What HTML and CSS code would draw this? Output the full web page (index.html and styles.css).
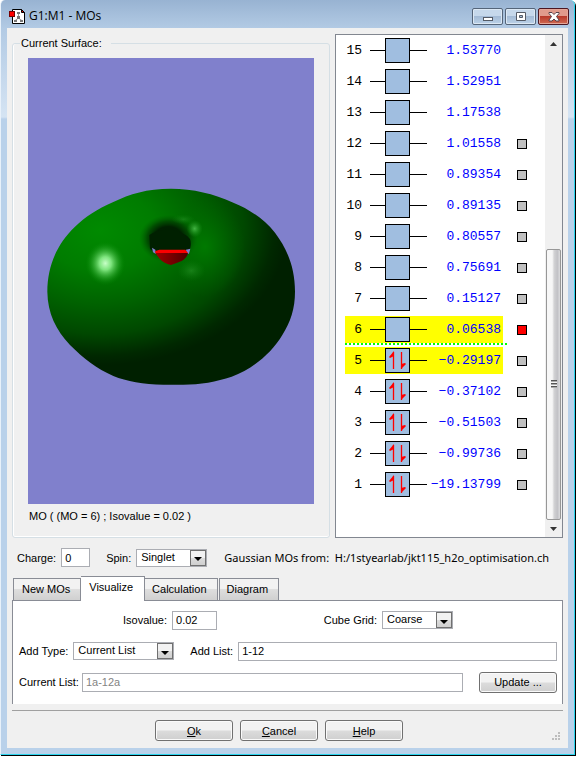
FILE: index.html
```html
<!DOCTYPE html>
<html lang="en">
<head>
<meta charset="utf-8">
<title>G1:M1 - MOs</title>
<link rel="stylesheet" href="styles.css">
</head>
<body>
<div class="window">
  <header class="titlebar">
    <svg class="app-icon" width="17" height="17" viewBox="0 0 17 17" aria-hidden="true">
      <path d="M3.500 1.500h9l3 3v11h-12z" fill="#fff" stroke="#000"/>
      <path d="M12.500 1.500v3h3z" fill="#e00" stroke="#000"/>
      <path d="M9.500 5v5l-4 3M9.500 10l4 3" fill="none" stroke="#999"/>
      <path d="M8 4h3v2h-3zM8 8h3v3h-3zM5 12h3v2h-3zM11 12h3v2h-3z" fill="#777"/>
      <rect x=".5" y="3.500" width="5" height="5" fill="#f00" stroke="#700"/>
    </svg>
    <h1 class="title">G1:M1 - MOs</h1>
    <div class="caption-buttons">
      <button class="cap" type="button" aria-label="Minimize"><svg width="12" height="12" viewBox="0 0 12 12"><rect x="1.500" y="6.500" width="9" height="3" fill="#fff" stroke="#555b66"/></svg></button>
      <button class="cap" type="button" aria-label="Maximize"><svg width="12" height="12" viewBox="0 0 12 12"><path d="M1.500 1.500h9v8h-9zM4.500 4.500v2h3v-2z" fill="#fff" fill-rule="evenodd" stroke="#555b66"/></svg></button>
      <button class="cap cap-close" type="button" aria-label="Close"><svg width="12" height="12" viewBox="0 0 12 12"><path d="M1 1.500h3l2 2 2-2h3v1L8.500 5.500 11 9v1H8L6 8 4 10H1V9l2.500-3.500L1 2.500z" fill="#fff" stroke="#56414a"/></svg></button>
    </div>
  </header>

  <main class="client">
    <div class="top">
      <fieldset class="surface">
        <legend>Current Surface:</legend>
        <svg class="viewer" viewBox="0 0 286 446" role="img" aria-label="Molecular orbital surface">
          <defs>
            <radialGradient id="body" gradientUnits="userSpaceOnUse" cx="0" cy="0" r="1" gradientTransform="translate(210 180) scale(560 405)">
              <stop offset="0" stop-color="#008a00"/><stop offset=".3" stop-color="#007c00"/>
              <stop offset=".55" stop-color="#006200"/><stop offset=".77" stop-color="#004800"/>
              <stop offset=".93" stop-color="#002800"/><stop offset="1" stop-color="#002000"/>
            </radialGradient>
            <radialGradient id="shine">
              <stop offset="0" stop-color="#c8ffc8"/><stop offset=".3" stop-color="#8cf08c" stop-opacity=".9"/>
              <stop offset=".65" stop-color="#40b840" stop-opacity=".5"/><stop offset="1" stop-color="#008800" stop-opacity="0"/>
            </radialGradient>
            <radialGradient id="glint">
              <stop offset="0" stop-color="#4fc04f" stop-opacity=".85"/><stop offset="1" stop-color="#1c961c" stop-opacity="0"/>
            </radialGradient>
            <radialGradient id="funnel">
              <stop offset="0" stop-color="#001e00"/><stop offset=".5" stop-color="#002000"/>
              <stop offset=".72" stop-color="#003800" stop-opacity=".7"/><stop offset="1" stop-color="#006000" stop-opacity="0"/>
            </radialGradient>
            <radialGradient id="right-lobe">
              <stop offset="0" stop-color="#007c00" stop-opacity=".9"/><stop offset="1" stop-color="#006800" stop-opacity="0"/>
            </radialGradient>
            <linearGradient id="bowl"><stop offset="0" stop-color="#a00000"/><stop offset="1" stop-color="#4c0000"/></linearGradient>
          </defs>
          <rect width="286" height="446" fill="#8080cc"/>
          <g transform="translate(2 112) scale(.33333)">
            <path d="M423 56C350 56 300 72 250 96C200 117 165 142 135 170C80 222 52 290 52 365C53 430 78 480 120 525C160 565 200 596 250 618C290 634 340 643 400 644H460C510 644 560 635 605 620C670 597 725 548 757 495C782 455 795 415 795 365C795 290 770 235 735 188C700 145 655 116 610 98C550 70 490 57 423 56Z" fill="url(#body)"/>
            <ellipse cx="525" cy="230" rx="120" ry="150" fill="url(#right-lobe)"/>
            <ellipse cx="415" cy="206" rx="88" ry="72" fill="url(#funnel)"/>
            <path d="M358 195Q375 182 420 178Q465 187 480 207Q485 220 480 238L470 252H378L360 236Z" fill="#002000"/>
            <path d="M366 233L376 239L378 252L369 247ZM468 239L481 236L477 251H470Z" fill="#8080cc"/>
            <path d="M376 249H474Q471 263 455 273Q440 279 423 285Q400 279 389 266Z" fill="url(#bowl)"/>
            <path d="M376 243L388 239H466L474 249H376Z" fill="#fa0000"/>
            <ellipse cx="226" cy="280" rx="60" ry="66" fill="url(#shine)"/>
            <ellipse cx="494" cy="176" rx="24" ry="26" fill="url(#glint)"/>
            <ellipse cx="460" cy="148" rx="36" ry="15" fill="url(#glint)" opacity=".3"/>
            <ellipse cx="484" cy="302" rx="42" ry="32" fill="url(#glint)" opacity=".35"/>
          </g>
        </svg>
        <p class="caption">MO ( (MO = 6) ; Isovalue = 0.02 )</p>
      </fieldset>

      <section class="orbitals" aria-label="Orbital energies">
        <svg class="defs" width="0" height="0" aria-hidden="true">
          <symbol id="level" viewBox="0 0 57 27">
            <path d="M0 13.500h15M40 13.500h17" stroke="#000"/>
            <rect x="15.500" y="1.500" width="24" height="24" fill="#a0bee0" stroke="#000"/>
          </symbol>
          <symbol id="pair" viewBox="0 0 57 27">
            <use href="#level" width="57" height="27"/>
            <path d="M23.500 22V5M31.500 5V22" fill="none" stroke="#f00" stroke-width="1.300"/>
            <path d="M24 4v5l-4 2-1-1zM31 22v-5l4-1 1 1z" fill="#f00"/>
          </symbol>
        </svg>
        <ol class="levels">
          <li><span class="level"><span class="num">15</span><svg class="mo"><use href="#level"/></svg><span class="energy">1.53770</span></span></li>
          <li><span class="level"><span class="num">14</span><svg class="mo"><use href="#level"/></svg><span class="energy">1.52951</span></span></li>
          <li><span class="level"><span class="num">13</span><svg class="mo"><use href="#level"/></svg><span class="energy">1.17538</span></span></li>
          <li><span class="level"><span class="num">12</span><svg class="mo"><use href="#level"/></svg><span class="energy">1.01558</span></span><button class="cube" type="button" aria-label="Show 12"></button></li>
          <li><span class="level"><span class="num">11</span><svg class="mo"><use href="#level"/></svg><span class="energy">0.89354</span></span><button class="cube" type="button" aria-label="Show 11"></button></li>
          <li><span class="level"><span class="num">10</span><svg class="mo"><use href="#level"/></svg><span class="energy">0.89135</span></span><button class="cube" type="button" aria-label="Show 10"></button></li>
          <li><span class="level"><span class="num">9</span><svg class="mo"><use href="#level"/></svg><span class="energy">0.80557</span></span><button class="cube" type="button" aria-label="Show 9"></button></li>
          <li><span class="level"><span class="num">8</span><svg class="mo"><use href="#level"/></svg><span class="energy">0.75691</span></span><button class="cube" type="button" aria-label="Show 8"></button></li>
          <li><span class="level"><span class="num">7</span><svg class="mo"><use href="#level"/></svg><span class="energy">0.15127</span></span><button class="cube" type="button" aria-label="Show 7"></button></li>
          <li class="lumo"><span class="level frontier"><span class="num">6</span><svg class="mo"><use href="#level"/></svg><span class="energy">0.06538</span></span><button class="cube active" type="button" aria-label="Show 6"></button></li>
          <li><span class="level frontier"><span class="num">5</span><svg class="mo"><use href="#pair"/></svg><span class="energy">−0.29197</span></span><button class="cube" type="button" aria-label="Show 5"></button></li>
          <li><span class="level"><span class="num">4</span><svg class="mo"><use href="#pair"/></svg><span class="energy">−0.37102</span></span><button class="cube" type="button" aria-label="Show 4"></button></li>
          <li><span class="level"><span class="num">3</span><svg class="mo"><use href="#pair"/></svg><span class="energy">−0.51503</span></span><button class="cube" type="button" aria-label="Show 3"></button></li>
          <li><span class="level"><span class="num">2</span><svg class="mo"><use href="#pair"/></svg><span class="energy">−0.99736</span></span><button class="cube" type="button" aria-label="Show 2"></button></li>
          <li><span class="level"><span class="num">1</span><svg class="mo"><use href="#pair"/></svg><span class="energy">−19.13799</span></span><button class="cube" type="button" aria-label="Show 1"></button></li>
        </ol>
        <div class="scrollbar">
          <button class="sb-arrow" type="button" aria-label="Scroll up"><svg width="7" height="4" viewBox="0 0 7 4"><path d="M0 4L3.500 0 7 4z" fill="#333"/></svg></button>
          <div class="sb-track"><div class="sb-thumb"><span class="sb-grip"></span></div></div>
          <button class="sb-arrow" type="button" aria-label="Scroll down"><svg width="7" height="4" viewBox="0 0 7 4"><path d="M0 0L3.500 4 7 0z" fill="#333"/></svg></button>
        </div>
      </section>
    </div>

    <div class="state">
      <label class="field charge">Charge: <input class="box box-charge" type="text" value="0"></label>
      <label class="field">Spin: <span class="combo"><select><option>Singlet</option></select><span class="drop"></span></span></label>
      <p class="source">Gaussian MOs from:&nbsp; H:/1styearlab/jkt115_h2o_optimisation.ch</p>
    </div>

    <div class="tabs" role="tablist">
      <button class="tab" type="button" role="tab">New MOs</button>
      <button class="tab selected" type="button" role="tab" aria-selected="true">Visualize</button>
      <button class="tab tab-calc" type="button" role="tab">Calculation</button>
      <button class="tab" type="button" role="tab">Diagram</button>
    </div>
    <section class="panel" role="tabpanel">
      <div class="row row-iso">
        <label class="field">Isovalue: <input class="box box-iso" type="text" value="0.02"></label>
        <label class="field">Cube Grid: <span class="combo"><select><option>Coarse</option></select><span class="drop"></span></span></label>
      </div>
      <div class="row">
        <label class="field">Add Type: <span class="combo combo-type"><select><option>Current List</option></select><span class="drop"></span></span></label>
        <label class="field grow">Add List: <input class="box" type="text" value="1-12"></label>
      </div>
      <div class="row">
        <label class="field field-tight grow">Current List: <input class="box" type="text" value="1a-12a" disabled></label>
        <button class="push" type="button">Update ...</button>
      </div>
    </section>

    <footer class="actions">
      <button class="push" type="button"><span><u>O</u>k</span></button>
      <button class="push" type="button"><span><u>C</u>ancel</span></button>
      <button class="push" type="button"><span><u>H</u>elp</span></button>
      <svg class="grip" width="8" height="8" viewBox="0 0 8 8" aria-hidden="true"><path d="M6 0h2v2H6zM6 3h2v2H6zM6 6h2v2H6zM3 3h2v2H3zM3 6h2v2H3zM0 6h2v2H0z" fill="#bdbdbd"/></svg>
    </footer>
  </main>
</div>
</body>
</html>
```
FILE: styles.css
```css
* { box-sizing: border-box; }

body {
  margin: 0;
  padding: 0 2px 2px 0;
  background: #fff;
  color: #000;
  font: 11px/14px "Liberation Sans", Arial, sans-serif;
}

button, input, select { font: inherit; color: inherit; margin: 0; }
h1, p, ol { margin: 0; padding: 0; font-weight: normal; }

.window {
  padding: 0 6px 6px;
  border-left: 1px solid #e8f1fa;
  border-right: 1px solid #2bd5ee;
  border-bottom: 1px solid #2bd5ee;
  border-radius: 5px 5px 0 0;
  box-shadow: 1px 1px 0 #000;
  background: linear-gradient(#98b3d2 0, #b2cae4 28px, #d5e4f3 117px, #b9d1ea 119px);
}

.titlebar {
  display: flex;
  align-items: center;
  gap: 3px;
  height: 28px;
  padding-left: 2px;
}
.app-icon { margin-top: 4px; }
.title { flex: 1; margin-top: 4px; font: 12px/16px "Open Sans", "Noto Sans", sans-serif; }
.caption-buttons { display: flex; gap: 2px; margin-right: -1px; padding-top: 5px; }
.cap {
  display: grid;
  place-items: center;
  width: 31px;
  height: 17px;
  padding: 0;
  border: 1px solid #556579;
  border-radius: 2px;
  background: linear-gradient(#c6d8eb 45%, #a4bbd6 50%, #bcd2e8);
  box-shadow: inset 0 0 0 1px #dce8f4;
}
.cap-close {
  border-color: #4c1722;
  background: linear-gradient(#e09a8c 45%, #b83a2b 50%, #cf6a53);
  box-shadow: inset 0 0 0 1px #e5a698;
}

.client { padding: 6px 5px 7px; background: #f0f0f0; }

.top { display: grid; grid-template-columns: 318fr 228fr; gap: 5px; }

.surface {
  min-width: 0;
  margin: 2px 0 0;
  padding: 8px 15px 14px;
  border: 1px solid #d5dfe5;
  border-radius: 3px;
  box-shadow: inset 1px 0 #fff, inset 0 -1px #fff;
}
.surface legend { margin-left: -8px; padding: 0 9px 0 1px; }
.viewer { display: block; width: 100%; }
.caption { margin-top: 5px; padding-left: 1px; }

.orbitals {
  display: flex;
  justify-content: space-between;
  border: 1px solid #828790;
  background: #fff;
}
.defs { position: absolute; }
.levels { list-style: none; padding-left: 9px; }
.levels li { display: flex; align-items: center; gap: 14px; height: 31px; }
.level {
  display: flex;
  align-items: center;
  width: 158px;
  height: 27px;
  font: 13px/16px "Liberation Mono", monospace;
}
.frontier { background: #ff0; }
.num { width: 17px; margin-right: 8px; text-align: right; }
.mo { flex: none; width: 57px; height: 27px; }
.energy { flex: 1; padding-right: 2px; text-align: right; white-space: nowrap; color: #00f; }
.cube { width: 10px; height: 10px; padding: 0; border: 1px solid #000; background: #c0c0c0; }
.cube.active { background: #f00; }
.lumo { position: relative; }
.lumo::after {
  content: "";
  position: absolute;
  left: 0;
  right: 20px;
  bottom: 0;
  height: 2px;
  background: repeating-linear-gradient(90deg, #0f0 0 2px, #fff 2px 4px);
}

.scrollbar { display: flex; flex-direction: column; width: 17px; background: #f0f0f0; }
.sb-arrow { display: grid; place-items: center; height: 17px; padding: 0; border: 0; background: none; }
.sb-track { flex: 1; display: flex; align-items: flex-end; }
.sb-thumb {
  display: grid;
  place-items: center;
  width: 15px;
  height: 58%;
  margin-left: 1px;
  border: 1px solid #979797;
  border-radius: 2px;
  background: linear-gradient(90deg, #f7f7f7 40%, #d2d2d4 55%, #c2c2c6 80%, #dcdcde);
}
.sb-grip { width: 6px; height: 8px; background: repeating-linear-gradient(#555 0 1px, #aaa 1px 2px, #f4f4f4 2px 3px); }

.state { display: flex; align-items: center; margin-top: 10px; padding: 0 5px; }
.field { display: flex; align-items: center; gap: 5px; white-space: nowrap; }
.field-tight { gap: 3px; }
.charge { margin-right: 16px; }
.source { margin-left: 17px; font: 11px/16px "Noto Sans", "Open Sans", sans-serif; white-space: nowrap; }

.box {
  width: 100%;
  height: 19px;
  padding: 0 3px;
  border: 1px solid #abadb3;
  border-radius: 0;
  background: #fff;
}
.box:disabled { color: #838383; }
.box-charge { width: 29px; }
.box-iso { width: 45px; }

.combo { position: relative; display: block; width: 71px; }
.combo select {
  display: block;
  width: 100%;
  height: 18px;
  padding: 0 18px 2px 4px;
  border: 1px solid #abadb3;
  border-radius: 0;
  background: #fff;
  appearance: none;
}
.drop {
  position: absolute;
  top: 1px;
  right: 1px;
  display: grid;
  place-items: center;
  width: 16px;
  height: 16px;
  border: 1px solid #707070;
  background: linear-gradient(#f2f2f2 50%, #dcdcdc 50%, #cfcfcf);
  pointer-events: none;
}
.drop::after { content: ""; margin-top: 3px; border: 4px solid transparent; border-top-color: #000; border-bottom: 0; }
.combo-type { width: 101px; }

.tabs { display: flex; align-items: flex-end; margin-top: 9px; padding-left: 1px; }
.tab {
  height: 22px;
  padding: 0 10px 2px 8px;
  border: 1px solid #898c95;
  border-bottom: 0;
  background: linear-gradient(#f2f2f2 45%, #dedede 50%, #d0d0d0);
}
.tab + .tab { padding-left: 7px; border-left: 0; }
.tab + .selected {
  position: relative;
  height: 25px;
  margin-bottom: -1px;
  padding: 0 11px 4px 8px;
  background: #fff;
}
.tab-calc { margin-right: 1px; }
.tab-calc + .tab { border-left: 1px solid #898c95; }

.panel {
  display: grid;
  gap: 11px;
  padding: 9px 5px 12px 6px;
  border: 1px solid #898c95;
  border-bottom: 0;
  background: #fff;
}
.row { display: flex; align-items: center; gap: 16px; height: 20px; }
.row-iso { justify-content: space-between; padding: 0 104px; }
.grow { flex: 1; }
.grow .box { flex: 1; min-width: 0; }

.push {
  width: 78px;
  height: 21px;
  padding: 0;
  border: 1px solid #707070;
  border-radius: 3px;
  background: linear-gradient(#f2f2f2 48%, #dcdcdc 52%, #cfcfcf);
  box-shadow: inset 0 0 0 1px #fafafa;
}

.actions {
  position: relative;
  display: flex;
  justify-content: center;
  gap: 7px;
  margin-top: 6px;
  padding: 9px 17px 0 0;
  border-top: 1px solid #a0a0a0;
}
.grip { position: absolute; right: 3px; bottom: 1px; }
```
